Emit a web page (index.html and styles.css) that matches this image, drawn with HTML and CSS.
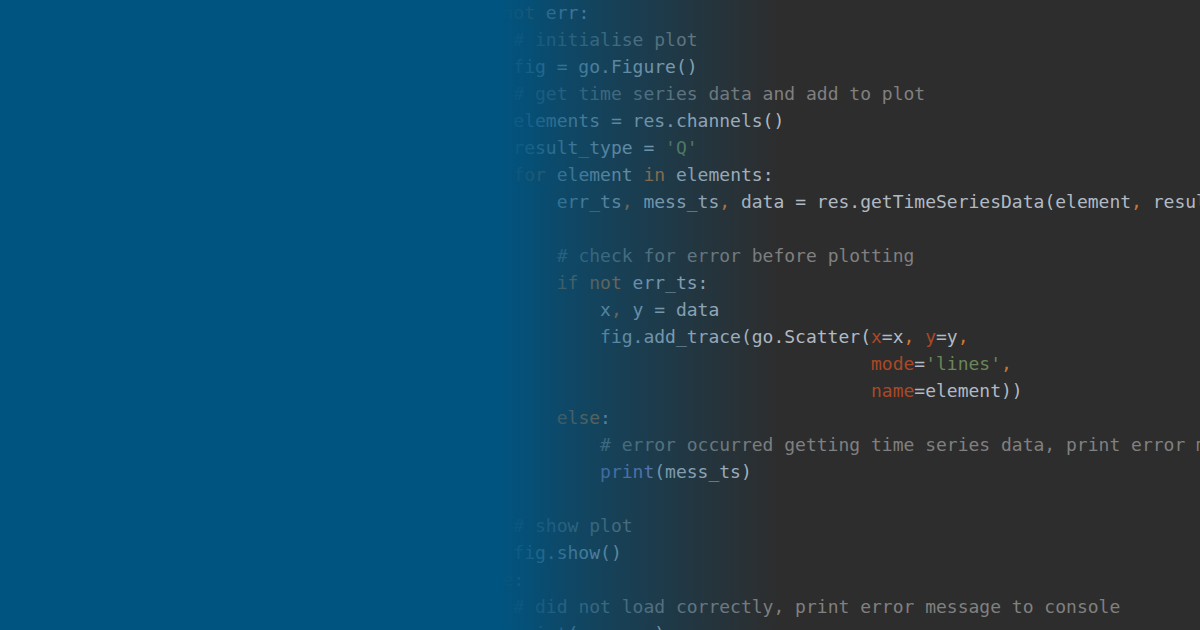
FILE: index.html
```html
<!DOCTYPE html>
<html lang="en">
<head>
<meta charset="utf-8">
<title>Code</title>
<link rel="stylesheet" href="styles.css">
</head>
<body>
<div class="canvas">
<pre class="code"><span class="kw">if not</span> err:
    <span class="cm"># initialise plot</span>
    fig = go.Figure()
    <span class="cm"># get time series data and add to plot</span>
    elements = res.channels()
    result_type = <span class="st">'Q'</span>
    <span class="kw">for</span> element <span class="kw">in</span> elements:
        err_ts<span class="kw">,</span> mess_ts<span class="kw">,</span> data = res.getTimeSeriesData(element<span class="kw">,</span> result_type)

        <span class="cm"># check for error before plotting</span>
        <span class="kw">if not</span> err_ts:
            x<span class="kw">,</span> y = data
            fig.add_trace(go.Scatter(<span class="ka">x</span>=x<span class="kw">,</span> <span class="ka">y</span>=y<span class="kw">,</span>
                                     <span class="ka">mode</span>=<span class="st">'lines'</span><span class="kw">,</span>
                                     <span class="ka">name</span>=element))
        <span class="kw">else</span>:
            <span class="cm"># error occurred getting time series data, print error message</span>
            <span class="bi">print</span>(mess_ts)

    <span class="cm"># show plot</span>
    fig.show()
<span class="kw">else</span>:
    <span class="cm"># did not load correctly, print error message to console</span>
    <span class="bi">print</span>(message)</pre>
<div class="fade"></div>
</div>
</body>
</html>
```

FILE: styles.css
```css
html, body {
  margin: 0;
  padding: 0;
  background: #2d2d2d;
}

.canvas {
  position: relative;
  width: 1200px;
  height: 630px;
  overflow: hidden;
  background: #2d2d2d;
}

.code {
  margin: 0;
  padding: 0 0 0 470px;
  position: relative;
  top: -1px;
  font-family: "DejaVu Sans Mono", "Liberation Mono", monospace;
  font-size: 18px;
  line-height: 27px;
  color: #b1bac4;
  white-space: pre;
}

.cm { color: #808080; }
.kw { color: #cc7832; }
.st { color: #6a8759; }
.ka { color: #aa4926; }
.bi { color: #8888c6; }

.fade {
  position: absolute;
  inset: 0;
  background: linear-gradient(to right,
    rgba(0, 84, 128, 1) 0,
    rgba(0, 84, 128, 1) 500px,
    rgba(0, 84, 128, 0.9) 525px,
    rgba(0, 84, 128, 0.72) 560px,
    rgba(0, 84, 128, 0.5) 615px,
    rgba(0, 84, 128, 0.22) 700px,
    rgba(0, 84, 128, 0) 780px,
    rgba(0, 84, 128, 0) 1200px);
}
```
